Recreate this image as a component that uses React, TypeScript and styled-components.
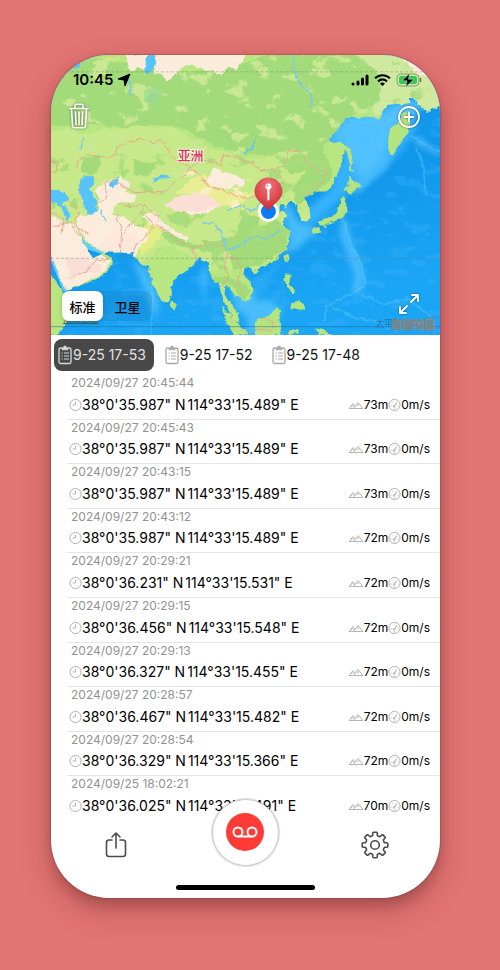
import React, { useState } from "react";
import styled, { createGlobalStyle } from "styled-components";

const GlobalStyle = createGlobalStyle`
  * { box-sizing: border-box; }
  body { margin: 0; background: #e27473; }
  button, input { font: inherit; }
`;

const sans = `Inter, "Noto Sans CJK SC", sans-serif`;

const Stage = styled.main`
  display: flex;
  min-height: 100vh;
  padding: 55px 60px 72px 51px;
  font-family: ${sans};
  color: #000;
`;

const Phone = styled.section`
  flex: 1;
  min-width: 0;
  display: flex;
  flex-direction: column;
  overflow: hidden;
  background: #fff;
  border-radius: 58px;
  box-shadow: 0 0 1px 1px rgba(120, 50, 50, 0.3), 0 8px 14px rgba(70, 20, 20, 0.26),
    0 12px 32px rgba(70, 20, 20, 0.2);
`;

const MapPanel = styled.header`
  position: relative;
  display: flex;
  flex-direction: column;
  justify-content: space-between;
  min-height: 280px;
  overflow: hidden;
`;

const MapDrawing = styled.svg`
  position: absolute;
  inset: 0;
  width: 100%;
  height: 100%;
`;

const MapTop = styled.div`
  position: relative;
`;

const StatusBar = styled.div`
  display: flex;
  align-items: center;
  justify-content: space-between;
  padding: 15px 18px 0 22px;
  height: 35px;
`;

const StatusGroup = styled.div<{ $gap: number }>`
  display: flex;
  align-items: center;
  gap: ${(p) => p.$gap}px;
`;

const Clock = styled.time`
  font-size: 15px;
  font-weight: 600;
  line-height: 20px;
`;

const MapBar = styled.div`
  position: relative;
  display: flex;
  align-items: center;
  justify-content: space-between;
  padding: 10px 18px 0 16px;
`;

const MapFooter = styled(MapBar)`
  align-items: flex-start;
  padding: 0 18px 14px 11px;
`;

const IconButton = styled.button`
  display: grid;
  place-items: center;
  padding: 0;
  border: 0;
  background: none;
  color: inherit;
  cursor: pointer;
`;

const MapButton = styled(IconButton)`
  color: #fff;
  filter: drop-shadow(0 0 1px rgba(0, 0, 0, 0.55));
`;

const Segments = styled.fieldset`
  display: flex;
  margin: 0;
  padding: 0;
  border: 0;
  border-radius: 8px;
  background: rgba(20, 115, 175, 0.22);
`;

const Segment = styled.label<{ $on: boolean }>`
  width: 41px;
  height: 30px;
  display: grid;
  place-items: center;
  border-radius: 7px;
  margin-right: 4px;
  background: ${(p) => (p.$on ? "#fff" : "transparent")};
  box-shadow: ${(p) => (p.$on ? "0 1px 4px rgba(0, 0, 0, 0.2)" : "none")};
  font-size: 13px;
  font-weight: 500;
  cursor: pointer;
`;

const HiddenRadio = styled.input`
  position: absolute;
  opacity: 0;
  pointer-events: none;
`;

const Tabs = styled.nav`
  display: flex;
  gap: 7px;
  padding: 4px 3px;
`;

const Tab = styled.button<{ $on: boolean }>`
  display: flex;
  align-items: center;
  gap: 1px;
  height: 32px;
  padding: 0 8px 1px 4px;
  border: 0;
  border-radius: 8px;
  background: ${(p) => (p.$on ? "#484848" : "transparent")};
  color: ${(p) => (p.$on ? "#e2e2e2" : "#111")};
  font-size: 14px;
  white-space: nowrap;
  cursor: pointer;
  svg { color: ${(p) => (p.$on ? "#d8d8d8" : "#a8a8a8")}; }
`;

const Records = styled.ul`
  flex: 1;
  display: grid;
  grid-auto-rows: 1fr;
  margin: 0;
  padding: 0 0 0 16px;
  list-style: none;
`;

const Record = styled.li`
  display: flex;
  flex-direction: column;
  justify-content: space-between;
  padding: 0 10px 4px 4px;
  border-bottom: 1px solid #e6e6e6;
  &:last-child { border-bottom-color: transparent; }
`;

const Stamp = styled.time`
  color: #929292;
  font-size: 12px;
  line-height: 16px;
`;

const Fix = styled.div`
  display: flex;
  align-items: center;
  justify-content: space-between;
  line-height: 20px;
  white-space: nowrap;
`;

const Position = styled.span`
  display: flex;
  align-items: center;
  margin-left: -2px;
  font-size: 14px;
  svg { color: #b4b4b4; }
`;

const Longitude = styled.span`
  margin-left: 2px;
`;

const Motion = styled.span`
  display: flex;
  align-items: center;
  font-size: 12px;
  svg { color: #b4b4b4; }
`;

const Toolbar = styled.footer`
  position: relative;
  display: flex;
  flex-direction: column;
  justify-content: space-between;
  height: 77px;
  padding-bottom: 8px;
`;

const Tools = styled.div`
  display: grid;
  grid-template-columns: repeat(3, 1fr);
  justify-items: center;
  align-items: center;
  height: 48px;
  color: #4b4b4b;
`;

const RecordButton = styled(IconButton)`
  width: 67px;
  height: 67px;
  margin-top: -26px;
  border: 1px solid #cdcdcd;
  border-radius: 50%;
  background: #fff;
  box-shadow: 0 0 1px 1px rgba(0, 0, 0, 0.14);
`;

const HomeIndicator = styled.div`
  align-self: center;
  width: 139px;
  height: 5px;
  border-radius: 3px;
  background: #000;
`;

const LAND =
  "M-5 -5H395V48L384 54 377 57 369 51 365 44 360 43 359 48 352 49 348 49 338 50 332 58 330 63 318 62 307 63 297 63 291 69 286 76 278 86 284 88 292 88 297 92 293 100 291 110 287 120 282 131 275 137 267 137 260 140 253 144 257 149 259 155 260 162 257 167 251 166 249 158 246 151 243 147 238 148 234 153 232 149 228 151 228 157 234 158 237 161 232 165 235 171 238 177 239 185 236 194 229 201 225 207 216 211 208 213 203 215 198 213 194 213 193 220 198 226 203 234 202 239 199 245 192 247 189 243 183 240 179 233 175 231 174 240 178 247 183 251 187 258 189 268 184 266 179 258 173 247 171 238 168 227 163 228 160 220 157 208 152 206 148 202 143 211 136 215 131 220 122 227 121 241 117 248 112 248 107 240 102 229 99 219 98 210 91 212 88 207 84 203 82 199 71 198 55 198 47 195 44 193 39 192 34 186 31 183 31 187 38 196 40 201 44 204 49 201 53 197 56 202 61 205 62 209 55 219 43 226 30 231 17 236 12 232 8 221 2 205 -5 198Z";
const AFRICA = "M-5 215 5 227 13 240 18 240 33 237 29 250 19 265 7 281H-5Z";

const ISLANDS = [
  "M297 91 300 94 302 103 301 111 303 119 299 116 299 105 296 96Z",
  "M299 122 306 127 312 132 305 135 300 139 294 136 299 131Z",
  "M293 140 296 147 296 157 293 163 289 165 283 167 278 170 270 171 267 168 276 164 282 162 287 157 290 148Z",
  "M263 172 269 172 270 178 264 179 262 176Z",
  "M272 171 278 172 274 174Z",
  "M238 199 239 204 236 208 234 203Z",
  "M201 216 207 214 208 219 203 220Z",
  "M236 219 240 220 239 230 245 236 243 239 237 234 234 225Z",
  "M241 250 249 245 254 252 253 257 246 254 240 254Z",
  "M203 269 211 264 219 260 226 254 231 257 229 265 231 281H205Z",
  "M170 252 177 258 187 268 198 281H183L176 266Z",
  "M238 276 250 276 247 280 238 280Z",
  "M264 274 275 276 282 281H269Z",
  "M120 245 126 250 124 256 120 253Z",
  "M358 56 360 65 357 79 349 91 343 101 338 98 338 85 340 73 348 67 354 58Z",
];

const STEPPE =
  "M-5 78 18 75 37 80 55 73 70 75 80 68 95 66 103 74 117 71 132 78 142 86 153 94 168 95 187 101 203 105 218 101 234 96 251 94 269 105 275 116 270 127 257 139 263 145 264 177 236 196 203 216 160 215 120 190 90 209 48 195 -5 175Z";
const DESERTS = [
  "M54 127 69 123 80 129 74 137 85 141 81 148 67 148 60 160 74 163 84 171 97 174 96 186 88 194 84 203 55 198 38 189 32 180 24 172 28 160 35 162 47 156 48 142 45 136Z",
  "M-5 159 10 166 23 171 31 183 41 201 50 201 60 207 54 218 17 236 12 231 2 205 -5 200Z",
  "M154 128 163 114 173 118 184 119 194 125 193 133 184 130 177 135 164 133Z",
  "M113 151 125 143 144 139 157 140 170 151 157 158 145 160 127 157Z",
  "M91 161 104 157 110 166 121 174 138 183 136 187 122 180 109 174 100 170Z",
  "M75 0H102L98 10 96 17 88 12 82 18 77 12Z",
  "M104 -5H199L186 15 178 12 170 20 156 15 141 10 134 11 124 20 116 27 109 18 103 20Z",
  "M346 -5H395V35L384 21 369 20 361 13Z",
  "M-5 -5H8L3 11 -5 14Z",
];
const FORESTS = [
  "M-5 6 42 3 93 12 136 18 190 10 230 -5 300 -5 331 20 329 47 299 63 276 88 263 106 242 94 220 101 193 99 165 92 134 74 103 70 73 73 40 69 -5 71Z",
  "M32 104 49 100 49 113 41 121 29 116Z",
  "M83 105 104 109 105 115 94 122 83 119Z",
  "M208 174 225 164 239 176 235 195 210 210 183 216 178 197 162 200 150 185 162 187 184 182 193 161 209 162Z",
  "M271 91 278 107 283 121 273 132 263 143 246 151 242 133 257 116 241 120 232 111 243 100 258 98Z",
  "M101 167 119 179 143 190 163 192 160 199 141 194 122 191 109 180Z",
  "M139 230 151 224 165 224 174 222 188 227 201 236 192 247 182 232 173 229Z",
];
const LAKES = [
  "M30 125 36 121 43 123 43 130 38 135 45 146 46 158 38 160 33 153 31 143 27 136Z",
  "M-5 137 8 135 18 143 11 150 -5 146Z",
  "M61 126 67 122 68 129 62 133 59 131Z",
  "M200 94 206 81 203 93 195 99 190 100Z",
  "M101 -5 106 9 99 18 93 17 96 5Z",
  "M21 8 29 3 28 11 22 14Z",
  "M102 124 112 121 122 123 112 124 104 128Z",
  "M1 145 14 152 20 161 17 166 14 160 10 153Z",
];
const SHALLOWS = [
  "M278 87 295 63 335 58 348 47 366 46 370 57 355 61 340 79 335 102 320 117 309 124 301 107 291 89Z",
  "M231 148 240 151 247 166 261 171 266 177 247 194 237 197 223 217 203 234 184 239 177 230 186 256 198 263 194 281 221 281 231 255 218 245 204 247 207 228 227 211 239 187Z",
  "M80 204 96 216 108 245 106 267 98 247 86 216Z",
  "M157 208 154 246 162 261 173 270 184 277 165 263 153 246 150 219Z",
  "M363 80 378 90 395 99 386 99 369 91Z",
  "M303 136 311 127 330 112 343 97 336 114 318 129 306 140Z",
  "M291 163 297 168 302 187 309 206 315 221 309 242 302 237 305 222 298 202 290 181Z",
];
const BORDERS = [
  "M25 114 27 107 37 100 57 104 66 99 66 92 89 84 103 88 111 86 119 98 122 104 140 112 135 119 122 130 116 137 84 138 73 132 64 127 54 128",
  "M140 112 151 106 171 110 173 100 200 108 211 116 223 115 234 110 238 95 251 97 253 104 266 115 277 118 271 128 262 135 254 144",
  "M140 114 152 123 158 133 177 137 196 144 218 139 234 127 223 115",
  "M66 148 79 153 94 150 102 159 108 162 106 172 118 177 125 185 143 193 152 190 172 191 177 199 173 209 178 224 171 233",
  "M66 160 71 179 69 197M94 150 84 165 73 178M95 160 103 172 87 190 82 199M24 171 38 180M2 172 18 167 25 178 34 184",
  "M143 194 145 206M177 203 188 205 191 217 186 228 193 239M18 224 35 218 43 207 57 205M-5 108 5 107 6 116 0 119",
  "M18 145 28 158 24 166 31 179M-5 155 13 164 11 179M208 265 215 264 223 269 222 276 205 275M54 128 56 143 48 148",
];

function AsiaMap() {
  return (
    <MapDrawing viewBox="0 0 390 281" preserveAspectRatio="xMidYMid slice" role="img" aria-label="亚洲">
      <defs>
        <linearGradient id="ocean" x1="0" y1="0" x2="0.3" y2="1">
          <stop offset="0" stopColor="#1296ea" />
          <stop offset="0.6" stopColor="#1097ea" />
          <stop offset="1" stopColor="#1ba5f5" />
        </linearGradient>
        <radialGradient id="pin" cx="0.5" cy="0.25" r="0.75">
          <stop offset="0" stopColor="#f0767b" />
          <stop offset="1" stopColor="#cc2932" />
        </radialGradient>
        <filter id="coast" x="0" y="0" width="100%" height="100%" filterUnits="userSpaceOnUse">
          <feTurbulence type="fractalNoise" baseFrequency="0.16" numOctaves="3" seed="4" />
          <feDisplacementMap in="SourceGraphic" scale="5" xChannelSelector="R" yChannelSelector="G" />
          <feGaussianBlur stdDeviation="0.4" />
        </filter>
        <filter id="patch" x="0" y="0" width="100%" height="100%" filterUnits="userSpaceOnUse">
          <feTurbulence type="fractalNoise" baseFrequency="0.05 0.07" numOctaves="5" seed="12" />
          <feColorMatrix values="0 0 0 0 0 0 0 0 0 0 0 0 0 0 0 12 0 0 0 -7.2" result="n" />
          <feComposite in="SourceGraphic" in2="n" operator="in" />
        </filter>
        <filter id="specks" x="0" y="0" width="100%" height="100%" filterUnits="userSpaceOnUse">
          <feTurbulence type="fractalNoise" baseFrequency="0.05 0.09" numOctaves="4" seed="31" />
          <feColorMatrix values="0 0 0 0 0 0 0 0 0 0 0 0 0 0 0 0 9 0 0 -5" result="n" />
          <feComposite in="SourceGraphic" in2="n" operator="in" />
        </filter>
        <filter id="haze" x="0" y="0" width="100%" height="100%" filterUnits="userSpaceOnUse">
          <feGaussianBlur stdDeviation="3" />
        </filter>
        <clipPath id="land">
          <path d={LAND} />
          <path d={AFRICA} />
        </clipPath>
      </defs>
      <rect width="390" height="281" fill="url(#ocean)" />
      <path d="M278 87 290 60 370 46 366 75 345 104 312 132 295 140 262 172 250 160 280 135 296 92Z" fill="#35b2fb" filter="url(#haze)" />
      <g filter="url(#haze)" fill="#61c9ff" opacity="0.7">
        {SHALLOWS.map((d) => <path key={d} d={d} />)}
      </g>
      <rect width="390" height="281" fill="#46baff" opacity="0.25" filter="url(#specks)" />
      <path d="M-5 198 2 205 15 237M31 184 39 193 54 198" fill="none" stroke="#62caff" strokeWidth="5" />
      <g fill="none" stroke="#6dcfff" strokeWidth="2" opacity="0.35" filter="url(#coast)">
        <path d="M293 164 300 187 311 211 315 231 302 239 286 246 277 253 274 267" />
        <path d="M361 81 375 90 392 99M367 94 373 112 376 140M101 217 101 281M311 240 334 250 357 244 382 263M283 253 305 264 332 268" />
      </g>
      <g filter="url(#coast)">
        <g fill="#b8e680">
          <path d={LAND} />
          <path d={AFRICA} />
        </g>
        <g clipPath="url(#land)">
          <path d="M300 -5H395V60H325Z" fill="#cfe9a0" />
          <path d={STEPPE} fill="#c8e98a" />
          {FORESTS.map((d) => <path key={d} d={d} fill="#a3db7a" />)}
          <path d="M124 139 142 124 151 119 178 136 204 139 188 151 170 151 155 140Z" fill="#e9ee94" />
          <path d="M88 181 100 166 113 177 103 191 90 202Z" fill="#e2ee83" />
          <g filter="url(#patch)">
            <path d={STEPPE} fill="#a9dc7b" />
            <path d="M-5 -5H395V60H300L260 100H-5Z" fill="#c8e893" />
            <path d="M300 -5H395V60H320Z" fill="#acdc82" />
            <path d="M115 115H205V155H120Z" fill="#f8efbd" />
          </g>
          {DESERTS.map((d) => <path key={d} d={d} fill="#fcecdc" />)}
          <path d="M113 151 125 143 144 139 157 140 170 151 150 157 127 157Z" fill="#fbdfd5" />
          <path d="M12 203 32 203 52 213 49 219 34 218 20 223Z" fill="#fadfd7" />
          <path d="M42 196 64 178 86 181 85 193 67 197Z" fill="#fbe5d8" opacity="0.6" />
          <path d="M93 38 103 29 112 37 106 48 95 48Z" fill="#98d994" opacity="0.7" />
        </g>
        {ISLANDS.map((d) => <path key={d} d={d} fill="#b4e47f" />)}
        <g fill="#57c3fa">{LAKES.map((d) => <path key={d} d={d} />)}</g>
        <g fill="none" stroke="#eaa08f" strokeWidth="0.9">
          {BORDERS.map((d) => <path key={d} d={d} />)}
        </g>
        <g fill="none" stroke="#72c9ed" strokeWidth="1.3">
          <path d="M244 -2 243 13 249 28 261 39 262 48 258 52M77 23 80 34 79 42" />
          <path d="M151 169 162 168 171 178 177 195 188 192 202 182 216 185 229 176" />
          <path d="M176 156 191 151 202 157 211 148 226 151M32 83 30 95M50 155 54 167" />
        </g>
      </g>
      <g stroke="#627f67" strokeDasharray="3 2" opacity="0.4">
        <path d="M0 17H390M0 204H390" />
      </g>
      <path d="M0 272.500H390" stroke="#16688f" opacity="0.5" />
      <g fontFamily={sans}>
        <text x="127" y="105" fontSize="13" fontWeight="500" fill="#da325c" stroke="#fff" strokeWidth="2" strokeOpacity="0.7" paintOrder="stroke">亚洲</text>
        <text x="325" y="273" fontSize="9" fill="#2675aa">太平洋</text>
        <text x="341" y="275" fontSize="11" fontWeight="700" fill="#b9c1c5" stroke="#6f8791" strokeWidth="1">高德地图</text>
        <text x="12" y="268" fontSize="9" fill="#405d5d" textDecoration="underline">法律信息</text>
      </g>
      <circle cx="218" cy="157" r="9" fill="#0a7bf5" stroke="#fff" strokeWidth="3" />
      <path d="M218 156C212 149 204 145 204 137A14 14 0 0 1 232 137C232 145 224 149 218 156Z" fill="url(#pin)" />
      <circle cx="218" cy="132" r="3" fill="#fff" />
      <path d="M218 133V145" stroke="#fff" strokeWidth="2" strokeLinecap="round" />
      <circle cx="217" cy="131" r="1" fill="#e7898e" />
    </MapDrawing>
  );
}

const ClipboardIcon = () => (
  <svg width="14" height="20" viewBox="0 0 14 20" fill="none" stroke="currentColor">
    <path d="M4 3H2.5A1.5 1.5 0 0 0 1 4.500V17A1.500 1.500 0 0 0 2.500 18.500H11.500A1.500 1.500 0 0 0 13 17V4.500A1.500 1.500 0 0 0 11.500 3H10" strokeWidth="1.300" />
    <path d="M4 4.800V3L5.500 2.500A1.500 1.500 0 0 1 8.500 2.500L10 3V4.800Z" fill="currentColor" strokeWidth="0.800" />
    <path d="M3.500 8H4.700M6 8H11M3.500 11H4.700M6 11H11M3.500 14H4.700M6 14H11" />
  </svg>
);

const ClockIcon = () => (
  <svg width="13" height="14" viewBox="0 0 13 14" fill="none" stroke="currentColor">
    <circle cx="6.500" cy="7" r="5.600" />
    <path d="M6.500 3.500V7H3.500" />
  </svg>
);

const MountainIcon = () => (
  <svg width="16" height="12" viewBox="0 0 16 12" fill="none" stroke="currentColor" strokeLinejoin="round">
    <path d="M5.500 9.500 10 3.500 15 9.500ZM7 7.500 5 4.500 1 9.500H5.500M3 7.500 4.500 6.500 5.500 7.500M8.500 5.500 10 6.500 11.500 5.500" />
  </svg>
);

const GaugeIcon = () => (
  <svg width="13" height="14" viewBox="0 0 13 14" fill="none" stroke="currentColor">
    <circle cx="6.500" cy="7" r="5.600" />
    <path d="M6 8.500 9 4.500" strokeWidth="1.200" />
    <circle cx="6" cy="8.500" r="0.800" />
    <path d="M3 9V7M4 5L4.500 4.500M6.500 3.500V4M10 7.500V9M5 11H8" strokeWidth="0.600" />
  </svg>
);

const GEAR = (() => {
  const teeth = 8;
  const parts: string[] = [];
  const at = (r: number, deg: number) => {
    const a = (deg * Math.PI) / 180;
    return `${(14 + r * Math.cos(a)).toFixed(2)} ${(14 + r * Math.sin(a)).toFixed(2)}`;
  };
  for (let i = 0; i < teeth; i++) {
    const c = (i * 360) / teeth - 90;
    parts.push(
      `${i ? "L" : "M"}${at(10, c - 13)}L${at(12, c - 11)}Q${at(12.800, c - 10)} ${at(12.900, c - 7)}L${at(12.900, c + 7)}Q${at(12.800, c + 10)} ${at(12, c + 11)}L${at(10, c + 13)}Q${at(8.800, c + 22)} ${at(10, c + 32)}`
    );
  }
  return parts.join("") + "Z";
})();

const tracks = ["9-25 17-53", "9-25 17-52", "9-25 17-48"];

const records = [
  ["2024/09/27 20:45:44", "35.987", "15.489", 73],
  ["2024/09/27 20:45:43", "35.987", "15.489", 73],
  ["2024/09/27 20:43:15", "35.987", "15.489", 73],
  ["2024/09/27 20:43:12", "35.987", "15.489", 72],
  ["2024/09/27 20:29:21", "36.231", "15.531", 72],
  ["2024/09/27 20:29:15", "36.456", "15.548", 72],
  ["2024/09/27 20:29:13", "36.327", "15.455", 72],
  ["2024/09/27 20:28:57", "36.467", "15.482", 72],
  ["2024/09/27 20:28:54", "36.329", "15.366", 72],
  ["2024/09/25 18:02:21", "36.025", "15.491", 70],
] as const;

export default function App() {
  const [layer, setLayer] = useState("标准");
  const [track, setTrack] = useState(0);
  return (
    <Stage>
      <GlobalStyle />
      <Phone>
        <MapPanel>
          <AsiaMap />
          <MapTop>
            <StatusBar>
              <StatusGroup $gap={4}>
                <Clock>10:45</Clock>
                <svg width="14" height="14" viewBox="0 0 14 14"><path d="M13 1 8 13 7 7 1 6Z" fill="#000" stroke="#000" strokeLinejoin="round" /></svg>
              </StatusGroup>
              <StatusGroup $gap={5}>
                <svg width="18" height="12" viewBox="0 0 18 12" stroke="#000" strokeWidth="3" strokeLinecap="round"><path d="M2 10V10M7 10V8M11.500 10V5M16 10V2" /></svg>
                <svg width="17" height="12" viewBox="0 0 17 12" fill="none" stroke="#000" strokeWidth="2.200"><path d="M1 4.300C5.500 .2 11.500 .2 16 4.300M4 7.300C6.700 5 10.300 5 13 7.300" /><path d="M6 9.400C7.500 8.300 9.500 8.300 11 9.400L8.500 12Z" fill="#000" stroke="none" /></svg>
                <svg width="26" height="14" viewBox="0 0 26 14"><rect x="1" y="1" width="22" height="12" rx="4" fill="none" stroke="#65765f" strokeOpacity=".65" /><rect x="3" y="3" width="18" height="8" rx="2" fill="#35c75a" /><path d="M24.500 5V9" stroke="#65765f" strokeWidth="1.500" /><path d="M13.500 .3 6 7.800H11L10 13.700 18 6.200H12.500Z" fill="#000" stroke="#b9e5a6" strokeWidth=".6" /></svg>
              </StatusGroup>
            </StatusBar>
            <MapBar>
              <MapButton aria-label="删除">
                <svg width="24" height="28" viewBox="0 0 24 28" fill="none" stroke="currentColor" strokeWidth="1.600" strokeLinecap="round" strokeLinejoin="round"><path d="M2.500 6.500H21.500M8 6V3.500A1.200 1.200 0 0 1 9.200 2.300H14.800A1.200 1.200 0 0 1 16 3.500V6M4.500 7 5.500 24A1.800 1.800 0 0 0 7.300 25.700H16.700A1.800 1.800 0 0 0 18.500 24L19.500 7M8.500 10 9 22.500M12 10V22.500M15.500 10 15 22.500" /></svg>
              </MapButton>
              <MapButton aria-label="添加">
                <svg width="26" height="32" viewBox="0 0 26 32" fill="none" stroke="currentColor" strokeWidth="1.800" strokeLinecap="round"><circle cx="13" cy="17" r="10" /><path d="M8.500 17H17.500M13 12.500V21.500" /></svg>
              </MapButton>
            </MapBar>
          </MapTop>
          <MapFooter>
            <Segments aria-label="地图类型">
              {["标准", "卫星"].map((name) => (
                <Segment key={name} $on={layer === name}>
                  <HiddenRadio type="radio" name="layer" checked={layer === name} onChange={() => setLayer(name)} />
                  {name}
                </Segment>
              ))}
            </Segments>
            <MapButton aria-label="全屏">
              <svg width="26" height="26" viewBox="0 0 26 26" fill="none" stroke="currentColor" strokeWidth="1.800" strokeLinecap="round" strokeLinejoin="round"><path d="M15 11 22 4M16 4H22V10M11 15 4 22M4 16V22H10" /></svg>
            </MapButton>
          </MapFooter>
        </MapPanel>
        <Tabs>
          {tracks.map((name, i) => (
            <Tab key={name} $on={i === track} onClick={() => setTrack(i)}>
              <ClipboardIcon />
              {name}
            </Tab>
          ))}
        </Tabs>
        <Records>
          {records.map(([time, lat, lon, height]) => (
            <Record key={time}>
              <Stamp>{time}</Stamp>
              <Fix>
                <Position>
                  <ClockIcon />
                  <span>{`38°0'${lat}" N`}</span>
                  <Longitude>{`114°33'${lon}" E`}</Longitude>
                </Position>
                <Motion>
                  <MountainIcon />
                  {height}m
                  <GaugeIcon />
                  0m/s
                </Motion>
              </Fix>
            </Record>
          ))}
        </Records>
        <Toolbar>
          <Tools>
            <IconButton aria-label="分享">
              <svg width="24" height="28" viewBox="0 0 24 28" fill="none" stroke="currentColor" strokeWidth="1.600" strokeLinecap="round" strokeLinejoin="round"><path d="M8 9H5A2.500 2.500 0 0 0 2.500 11.500V23A2.500 2.500 0 0 0 5 25.500H19A2.500 2.500 0 0 0 21.500 23V11.500A2.500 2.500 0 0 0 19 9H16M12 17V2M8 6 12 2 16 6" /></svg>
            </IconButton>
            <RecordButton aria-label="记录">
              <svg width="38" height="38" viewBox="0 0 38 38" fill="none"><circle cx="19" cy="19" r="19" fill="#ff3b38" /><g stroke="#fff" strokeWidth="2"><circle cx="12" cy="19" r="4.500" /><circle cx="26" cy="19" r="4.500" /><path d="M12 23.500H26" /></g></svg>
            </RecordButton>
            <IconButton aria-label="设置">
              <svg width="28" height="28" viewBox="0 0 28 28" fill="none" stroke="currentColor" strokeWidth="1.600" strokeLinejoin="round"><path d={GEAR} /><circle cx="14" cy="14" r="4.300" /></svg>
            </IconButton>
          </Tools>
          <HomeIndicator />
        </Toolbar>
      </Phone>
    </Stage>
  );
}
